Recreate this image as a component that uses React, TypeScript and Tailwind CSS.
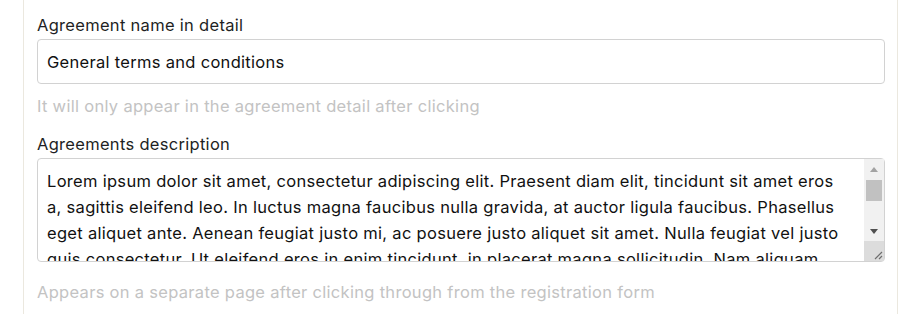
const lorem =
  "Lorem ipsum dolor sit amet, consectetur adipiscing elit. Praesent diam elit, tincidunt sit amet eros a, sagittis eleifend leo. In luctus magna faucibus nulla gravida, at auctor ligula faucibus. Phasellus eget aliquet ante. Aenean feugiat justo mi, ac posuere justo aliquet sit amet. Nulla feugiat vel justo quis consectetur. Ut eleifend eros in enim tincidunt, in placerat magna sollicitudin. Nam aliquam tortor vel sem mattis, et pretium nisi fermentum. Curabitur dictum risus eget nisl vestibulum, vitae vehicula erat gravida.";

function Field({
  label,
  hint,
  children,
}: {
  label: string;
  hint: string;
  children: React.ReactNode;
}) {
  return (
    <div className="flex flex-col">
      <label className="mb-[2px] text-[16.5px] leading-[24px] tracking-[0.3px] text-[#1e1f24]">
        {label}
      </label>
      {children}
      <p className="text-[16.5px] leading-[24px] tracking-[0.3px] text-[#c3c3c3]">{hint}</p>
    </div>
  );
}

// classic scrollbar drawn over the textarea's right edge
function FakeScrollbar() {
  return (
    <div className="pointer-events-none absolute bottom-[1px] right-[1px] top-[1px] flex w-[20px] flex-col bg-[#f1f1f1]">
      <div className="flex h-[21px] items-center justify-center">
        <svg width="8" height="5" viewBox="0 0 8 5">
          <path d="M4 0 L8 5 L0 5 Z" fill="#a3a3a3" />
        </svg>
      </div>
      <div className="mx-[2px] h-[21px] bg-[#c1c1c1]" />
      <div className="flex-1" />
      <div className="flex h-[20px] items-center justify-center">
        <svg width="8" height="5" viewBox="0 0 8 5">
          <path d="M0 0 L8 0 L4 5 Z" fill="#505050" />
        </svg>
      </div>
      <div className="h-[20px] bg-[#dcdcdc]">
        <svg width="20" height="20" viewBox="0 0 20 20">
          <path d="M18 11 L11 18 M18 15 L15 18" stroke="#6e6e6e" strokeWidth="1.2" />
        </svg>
      </div>
    </div>
  );
}

export default function App() {
  return (
    <div className="min-h-[314px] bg-white font-['Inter',sans-serif]">
      <div className="mx-[23px] flex min-h-[314px] flex-col border-x border-[#ebe8df] pl-[13px] pr-[12px] pt-[13px]">
        <Field label="Agreement name in detail" hint="It will only appear in the agreement detail after clicking">
          <input
            defaultValue="General terms and conditions"
            className="mb-[10px] h-[45px] rounded-[4px] border border-[#d2d2d2] px-[9px] text-[16.5px] tracking-[0.3px] text-[#111] outline-none"
          />
        </Field>
        <div className="h-[14px]" />
        <Field
          label="Agreements description"
          hint="Appears on a separate page after clicking through from the registration form"
        >
          <div className="relative mb-[18px] h-[104px]">
            <textarea
              defaultValue={lorem}
              className="h-full w-full resize-none overflow-hidden rounded-[4px] border border-[#d2d2d2] pl-[9px] pr-[34px] pt-[9px] text-[16.5px] leading-[26px] tracking-[0.3px] text-[#111] outline-none"
            />
            <FakeScrollbar />
          </div>
        </Field>
      </div>
    </div>
  );
}
